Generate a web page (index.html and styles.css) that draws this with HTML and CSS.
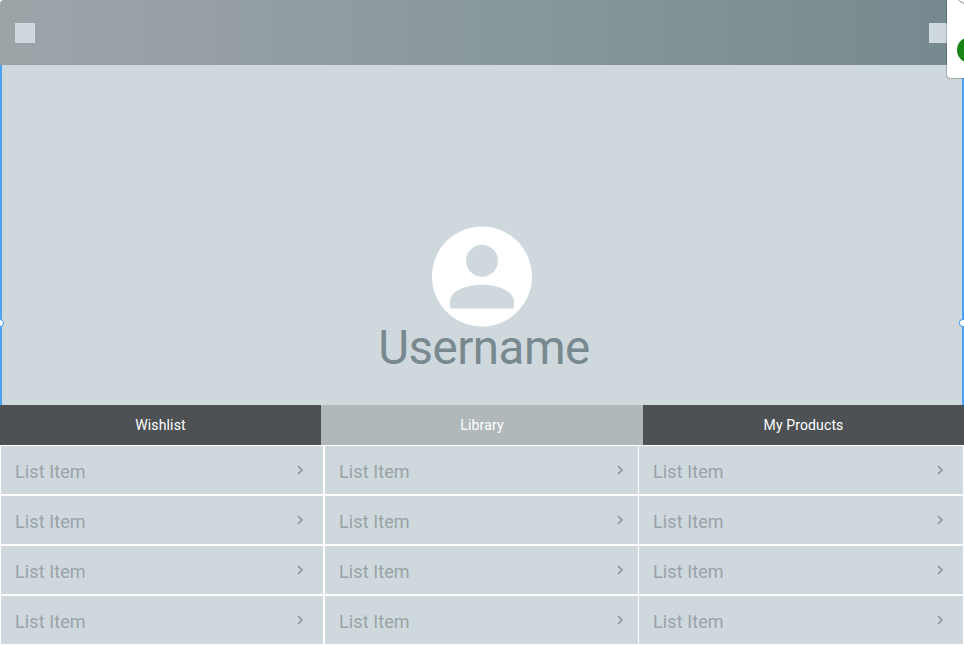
FILE: index.html
```
<!DOCTYPE html>
<html lang="en">
<head>
<meta charset="utf-8">
<title>Profile</title>
<link rel="stylesheet" href="styles.css">
</head>
<body>
<header class="topbar"><span class="square"></span><span class="square"></span></header>
<section class="profile">
  <span class="handle handle-left"></span><span class="handle handle-right"></span>
  <svg class="avatar" viewBox="2 2 20 20"><path d="M12 2C6.48 2 2 6.48 2 12s4.48 10 10 10 10-4.48 10-10S17.520 2 12 2zm0 3.650a3.200 3.200 0 1 1 0 6.400 3.200 3.200 0 0 1 0-6.400zM5.600 18.400v-1.400c0-2.200 3.500-3.350 6.400-3.350s6.400 1.150 6.400 3.350v1.400z" fill="#fff" fill-rule="evenodd"/></svg>
  <h1 class="username">Username</h1>
</section>
<nav class="tabs"><span class="tab">Wishlist</span><span class="tab active">Library</span><span class="tab">My Products</span></nav>
<main class="lists">
  <ul class="list">
    <li class="item">List Item<svg class="chevron" viewBox="0 0 8 10"><path d="M2 1l4 4-4 4"/></svg></li>
    <li class="item">List Item<svg class="chevron" viewBox="0 0 8 10"><path d="M2 1l4 4-4 4"/></svg></li>
    <li class="item">List Item<svg class="chevron" viewBox="0 0 8 10"><path d="M2 1l4 4-4 4"/></svg></li>
    <li class="item">List Item<svg class="chevron" viewBox="0 0 8 10"><path d="M2 1l4 4-4 4"/></svg></li>
  </ul>
  <ul class="list library">
    <li class="item">List Item<svg class="chevron" viewBox="0 0 8 10"><path d="M2 1l4 4-4 4"/></svg></li>
    <li class="item">List Item<svg class="chevron" viewBox="0 0 8 10"><path d="M2 1l4 4-4 4"/></svg></li>
    <li class="item">List Item<svg class="chevron" viewBox="0 0 8 10"><path d="M2 1l4 4-4 4"/></svg></li>
    <li class="item">List Item<svg class="chevron" viewBox="0 0 8 10"><path d="M2 1l4 4-4 4"/></svg></li>
  </ul>
  <ul class="list products">
    <li class="item">List Item<svg class="chevron" viewBox="0 0 8 10"><path d="M2 1l4 4-4 4"/></svg></li>
    <li class="item">List Item<svg class="chevron" viewBox="0 0 8 10"><path d="M2 1l4 4-4 4"/></svg></li>
    <li class="item">List Item<svg class="chevron" viewBox="0 0 8 10"><path d="M2 1l4 4-4 4"/></svg></li>
    <li class="item">List Item<svg class="chevron" viewBox="0 0 8 10"><path d="M2 1l4 4-4 4"/></svg></li>
  </ul>
</main>
<aside class="popover">
  <svg class="popover-icons" viewBox="0 0 17 78"><circle cx="19" cy="-6" r="9.500" fill="none" stroke="#888"/><circle cx="23" cy="50" r="13" fill="#168516"/></svg>
</aside>
</body>
</html>
```
FILE: styles.css
```
* { box-sizing: border-box; }
body {
  margin: 0;
  position: relative;
  width: 964px;
  height: 645px;
  overflow: hidden;
  background: #fff;
  font-family: Roboto, "Liberation Sans", sans-serif;
}
.topbar {
  height: 65px;
  padding: 23px 15px;
  display: flex;
  justify-content: space-between;
  align-items: flex-start;
  border-top-left-radius: 4px;
  background: linear-gradient(90deg, #9ba5a7 0%, #9aa2a8 10%, #87979a 55%, #75898e 100%);
}
.square { width: 20px; height: 20px; background: #cfd8de; }
.profile {
  position: relative;
  height: 340px;
  padding-top: 161px;
  display: flex;
  flex-direction: column;
  align-items: center;
  background: #cfd8dd;
  border: solid #4da3f3;
  border-width: 0 2px;
}
.avatar { width: 100px; height: 101px; flex: none; }
.username {
  margin: -7px 0 0 4px;
  font-size: 47.5px;
  line-height: 56px;
  font-weight: 400;
  letter-spacing: -.5px;
  color: #78898f;
}
.handle {
  position: absolute;
  top: 254px;
  width: 8px;
  height: 8px;
  border: 1px solid #4da3f3;
  border-radius: 50%;
  background: #fff;
}
.handle-left { left: -6px; }
.handle-right {
  right: -2px;
  width: 5px;
  border-right: 0;
  border-radius: 4px 0 0 4px;
}
.tabs { display: grid; grid-template-columns: 321px 322px 321px; height: 40px; }
.tab {
  display: flex;
  align-items: center;
  justify-content: center;
  background: #4d5154;
  color: #fff;
  font-size: 14px;
  letter-spacing: .13px;
}
.active { background: #b0b8b9; }
.lists {
  display: grid;
  grid-template-columns: 322px 313px 324px;
  column-gap: 2px;
  padding: 1px;
}
.list {
  margin: 0;
  padding: 0;
  list-style: none;
  display: grid;
  grid-auto-rows: 48px;
  row-gap: 2px;
}
.item {
  display: flex;
  align-items: center;
  justify-content: space-between;
  padding: 2px 19px 0 14px;
  background: #cfd8dd;
  color: #9aa3a9;
  font-size: 18px;
  letter-spacing: .1px;
}
.library .item { color: #98a5a5; padding-right: 14px; }
.products { margin-left: -1px; margin-right: 1px; }
.chevron {
  width: 8px;
  height: 10px;
  margin-top: -2px;
  fill: none;
  stroke: #8b949b;
  stroke-width: 1.6;
}
.popover {
  position: absolute;
  top: 0;
  right: 0;
  width: 17px;
  height: 78px;
  background: #fff;
  border-bottom-left-radius: 4px;
  box-shadow: -1px 1px 1px #0003;
}
.popover-icons { display: block; width: 17px; height: 78px; overflow: hidden; }
```
